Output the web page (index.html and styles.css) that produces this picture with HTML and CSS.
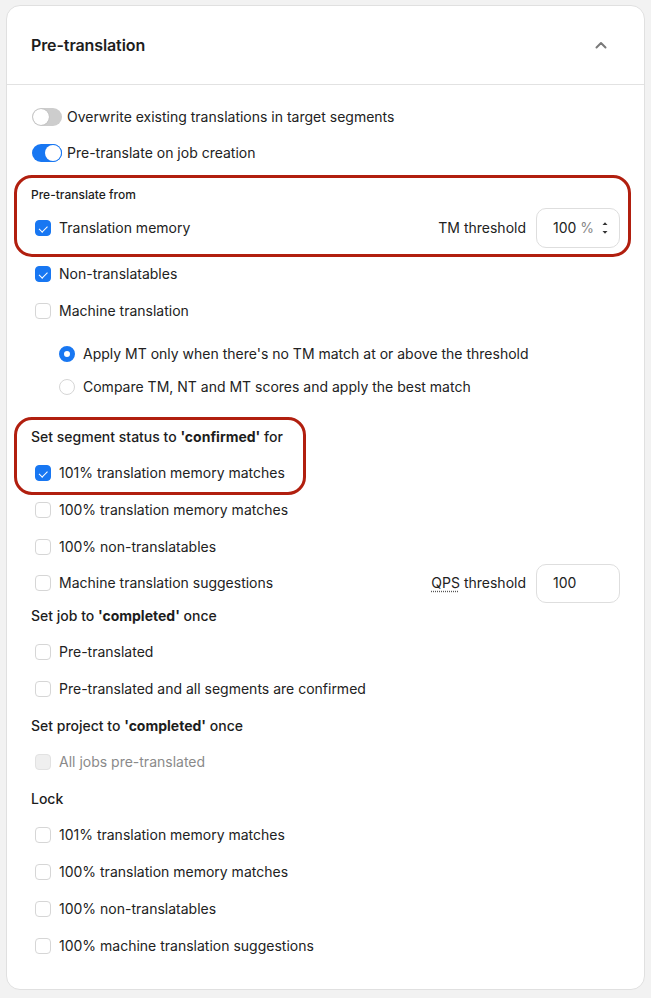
FILE: index.html
```html
<!DOCTYPE html>
<html lang="en">
<head>
<meta charset="utf-8">
<title>Pre-translation</title>
<link rel="stylesheet" href="styles.css">
</head>
<body>
<section class="card">
  <header class="card-head">
    <h2 class="title">Pre-translation</h2>
    <svg class="chevron" width="14" height="8" viewBox="0 0 14 8"><path d="M2.5 6.5 L7 2 L11.5 6.5" fill="none" stroke="#7a7a7a" stroke-width="2" stroke-linecap="round" stroke-linejoin="round"/></svg>
  </header>
  <div class="card-body">
    <div class="row toggle-row">
      <span class="toggle"><span class="knob"></span></span>
      <span>Overwrite existing translations in target segments</span>
    </div>
    <div class="row toggle-row">
      <span class="toggle on"><span class="knob"></span></span>
      <span>Pre-translate on job creation</span>
    </div>

    <div class="group g-from">
      <div class="mark mark-1"></div>
      <div class="small-heading">Pre-translate from</div>
      <div class="row field-row">
        <span class="cb checked"></span>
        <span class="grow">Translation memory</span>
        <span class="field-label">TM threshold</span>
        <span class="num">
          <span class="num-val">100</span><span class="unit">%</span>
          <svg class="spin" width="8" height="16" viewBox="0 0 8 16"><path d="M1.5 5 L4 2.2 L6.5 5 Z" fill="#333"/><path d="M1.5 11 L4 13.8 L6.5 11 Z" fill="#333"/></svg>
        </span>
      </div>
    </div>
    <div class="row cb-row r-nt"><span class="cb checked"></span><span>Non-translatables</span></div>
    <div class="row cb-row"><span class="cb"></span><span>Machine translation</span></div>
    <div class="radios">
      <div class="row radio-row"><span class="radio on"></span><span>Apply MT only when there's no TM match at or above the threshold</span></div>
      <div class="row radio-row"><span class="radio"></span><span>Compare TM, NT and MT scores and apply the best match</span></div>
    </div>

    <div class="group g-confirm">
      <div class="mark mark-2"></div>
      <div class="heading">Set segment status to <b>'confirmed'</b> for</div>
      <div class="row cb-row"><span class="cb checked"></span><span>101% translation memory matches</span></div>
    </div>
    <div class="row cb-row"><span class="cb"></span><span>100% translation memory matches</span></div>
    <div class="row cb-row"><span class="cb"></span><span>100% non-translatables</span></div>
    <div class="row cb-row qps-row"><span class="cb"></span><span class="grow">Machine translation suggestions</span><span class="field-label"><span class="abbr">QPS</span> threshold</span><span class="num plain"><span class="num-val">100</span></span></div>

    <div class="heading h-job">Set job to <b>'completed'</b> once</div>
    <div class="row cb-row"><span class="cb"></span><span>Pre-translated</span></div>
    <div class="row cb-row"><span class="cb"></span><span>Pre-translated and all segments are confirmed</span></div>

    <div class="heading">Set project to <b>'completed'</b> once</div>
    <div class="row cb-row disabled"><span class="cb"></span><span>All jobs pre-translated</span></div>

    <div class="heading">Lock</div>
    <div class="row cb-row"><span class="cb"></span><span>101% translation memory matches</span></div>
    <div class="row cb-row"><span class="cb"></span><span>100% translation memory matches</span></div>
    <div class="row cb-row"><span class="cb"></span><span>100% non-translatables</span></div>
    <div class="row cb-row"><span class="cb"></span><span>100% machine translation suggestions</span></div>
  </div>
</section>
</body>
</html>
```

FILE: styles.css
```css
* { box-sizing: border-box; }
html, body { margin: 0; padding: 0; }
body {
  background: #f2f2f2;
  font-family: Inter, "Liberation Sans", sans-serif;
  font-size: 14px;
  color: #222;
  padding: 5px 6px 8px 6px;
}
.card {
  background: #fff;
  border: 1px solid #e0e0e0;
  border-radius: 14px;
  height: 985px;
}
.card-head {
  height: 79px;
  display: flex;
  align-items: center;
  justify-content: space-between;
  padding: 0 36px 0 24px;
  border-bottom: 1px solid #e2e2e2;
}
.title {
  margin: 0;
  font-size: 16px;
  font-weight: 600;
  color: #1d1d1d;
  letter-spacing: -0.1px;
}
.chevron { display: block; margin-top: 0; }
.card-body {
  padding: 14px 24px 0 24px;
  display: flex;
  flex-direction: column;
}
.row {
  display: flex;
  align-items: center;
  line-height: 20px;
}
.toggle-row { height: 36px; gap: 5px; padding-left: 1px; }
.toggle {
  position: relative;
  width: 30px;
  height: 18px;
  border-radius: 9px;
  background: #cdcdcd;
  flex: none;
}
.toggle .knob {
  position: absolute;
  top: 1px; left: 1px;
  width: 16px; height: 16px;
  border-radius: 50%;
  background: #fff;
  box-shadow: 0 0 1px rgba(0,0,0,.3);
}
.toggle.on { background: #1877f2; }
.toggle.on .knob { left: 13px; box-shadow: 0 0 0 1px #1877f2; }

.group { position: relative; }
.mark {
  position: absolute;
  border: 3px solid #b11f0f;
  border-radius: 18px;
  pointer-events: none;
}
.mark-1 { left: -17px; right: -11px; top: -8px; bottom: -9px; }
.mark-2 { left: -17px; width: 292px; top: -2px; bottom: -4px; }

.g-from { margin-top: 12px; }
.small-heading {
  font-size: 12px;
  font-weight: 500;
  height: 24px;
  line-height: 24px;
  color: #1d1d1d;
}
.field-row { height: 40px; margin-top: 1px; gap: 8px; }
.cb-row { height: 37px; gap: 8px; }
.qps-row { height: 36px; }
.grow { flex: 1; }
.field-label { margin-right: 2px; color: #222; }
.abbr { text-decoration: underline dotted #555; text-underline-offset: 3px; }
.num {
  width: 84px;
  height: 40px;
  border: 1px solid #dedede;
  border-radius: 10px;
  display: flex;
  align-items: center;
  padding-left: 16px;
  padding-right: 10px;
  flex: none;
}
.num .unit { color: #888; margin-left: 4px; flex: 1; }
.num .spin { display: block; }
.num.plain { height: 39px; }

.cb {
  width: 16px;
  height: 16px;
  margin-left: 4px;
  border: 1px solid #d6d6d6;
  border-radius: 4px;
  background: #fff;
  flex: none;
  position: relative;
}
.cb.checked {
  background: #1877f2;
  border-color: #1877f2;
}
.cb.checked::after {
  content: "";
  position: absolute;
  left: 5px; top: 3px;
  width: 3.5px; height: 6.5px;
  border: solid #fff;
  border-width: 0 1.8px 1.8px 0;
  transform: rotate(45deg);
}
.disabled { color: #8a8a8a; }
.disabled .cb { background: #efefef; border-color: #e2e2e2; }

.r-nt { margin-top: 7px; }
.radios { padding-left: 28px; margin-top: 8px; }
.radio-row { height: 33px; gap: 8px; }
.radio {
  width: 16px; height: 16px;
  border-radius: 50%;
  border: 1px solid #d6d6d6;
  flex: none;
}
.radio.on { border: 5px solid #1877f2; background: #fff; }

.heading {
  height: 24px;
  line-height: 24px;
  font-weight: 500;
  color: #1d1d1d;
  margin-top: 7px;
  margin-bottom: 5px;
}
.heading b { font-weight: 700; }
.g-confirm { margin-top: 16px; }
.g-confirm .heading { margin-top: 6px; }
.h-job { margin-top: 3px; }
```
